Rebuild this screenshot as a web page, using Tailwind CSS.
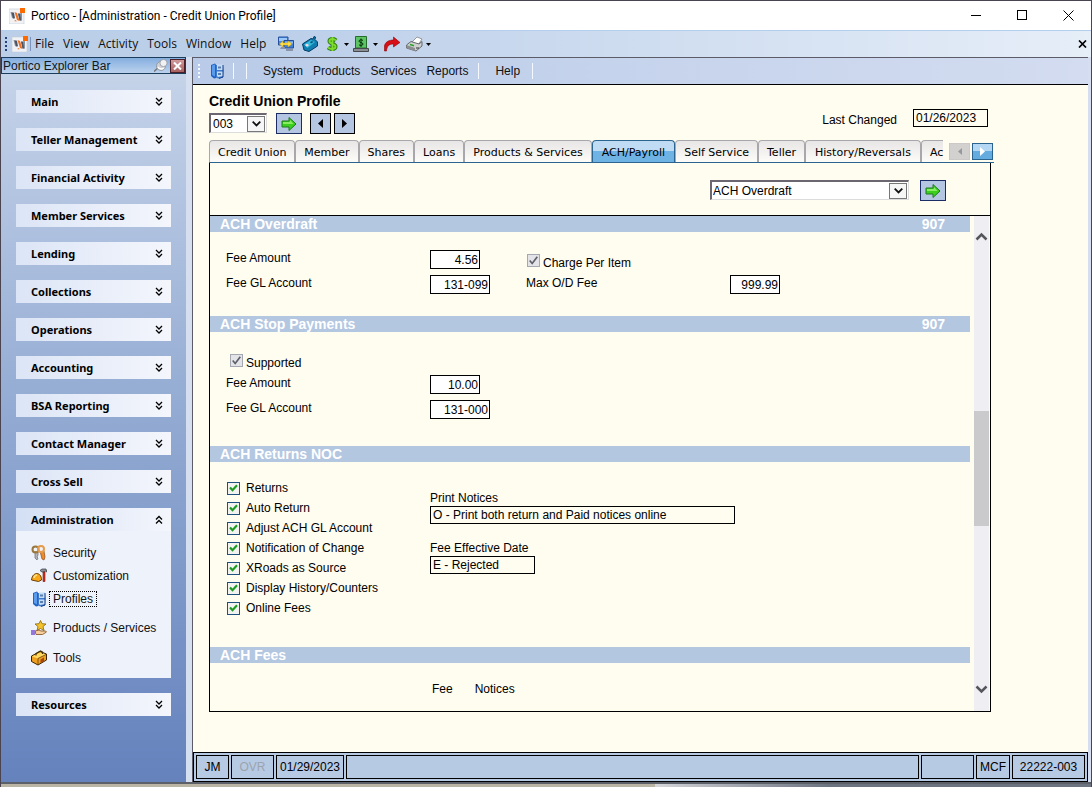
<!DOCTYPE html>
<html lang="en">
<head>
    <meta charset="UTF-8">
    <meta name="viewport" content="width=device-width, initial-scale=1.0">
    <title>Portico - [Administration - Credit Union Profile]</title>
    <script src="https://cdn.jsdelivr.net/npm/@tailwindcss/browser@4"></script>
</head>
<body class="flex min-h-screen flex-col border-x border-t border-[#4a4450] bg-[#d5dff0] font-['Liberation_Sans',Arial,sans-serif] text-[12px] leading-4 text-black">

    <!-- shared icons -->
    <svg class="hidden">
        <symbol id="logo" viewBox="0 0 16 16">
            <rect x="0" y="1" width="15" height="15" fill="#f1f2f5" stroke="#c4c8d0" stroke-width=".6"/>
            <path d="M1.500 4 5 4.500V11L3 10z" fill="#8a93a0"/>
            <path d="M2.500 4.500 5 5l1 5.500-2-.500z" fill="#4a5464"/>
            <path d="M5.500 4 8 5l2.500 8L8 12z" fill="#f0701c"/>
            <path d="M5 13l2-1 .500 1.500z" fill="#f0701c"/>
            <path d="M9 5.500 13 5v7.500l-2 .500z" fill="#8a93a0"/>
            <path d="M9 5.500 11 6l1 6-1.500.500z" fill="#4a5464"/>
            <rect x="11" y="0" width="5" height="5" fill="#ff6a00"/>
        </symbol>
        <symbol id="down" viewBox="0 0 8 10">
            <path d="M1 1l3 3 3-3M1 5l3 3 3-3" fill="none" stroke="#000" stroke-width="1.300"/>
        </symbol>
        <symbol id="up" viewBox="0 0 8 10">
            <path d="M1 4.500l3-3 3 3M1 8.500l3-3 3 3" fill="none" stroke="#000" stroke-width="1.300"/>
        </symbol>
        <symbol id="caret" viewBox="0 0 5 3"><path d="M0 0h5L2.500 3z"/></symbol>
        <symbol id="go" viewBox="0 0 16 16">
            <path d="M1 5h7V1.500L15 8l-7 6.500V11H1z" fill="#3ccf1e" stroke="#1c7a1c"/>
            <path d="M2 6h7V4l3.500 4H2z" fill="#8aec62"/>
        </symbol>
        <symbol id="drop" viewBox="0 0 9 6"><path d="M.7.7l3.800 3.800L8.300.7" fill="none" stroke="#111" stroke-width="1.800"/></symbol>
        <symbol id="tick" viewBox="0 0 9 8"><path d="M1 3.500l2.500 2.700L8 1.200" fill="none" stroke="currentColor" stroke-width="2.200"/></symbol>
        <symbol id="tick-thin" viewBox="0 0 9 9"><path d="M.7 4.500 3.200 7.500 8.300.8" fill="none" stroke="currentColor" stroke-width="1.700"/></symbol>
        <symbol id="cabinet" viewBox="0 0 16 16">
            <path d="M2 2l4-1.500 1.500 2V15L5 15.500 2 13z" fill="#1f63c4"/>
            <path d="M3 2.500 6 1.500v12L3 12z" fill="#5b9bee"/>
            <path d="M7 2h7l.500 6-.500 6.500-5 1L7 14z" fill="#3c78cc"/>
            <path d="M8 1.500h6v5.500H8zM8 8.500h6V13l-5 1-1-1z" fill="#c4dcf6"/>
            <path d="M9 3.500h3v2H9zM9 10h3v2H9z" fill="#5a7fae"/>
            <path d="M14 2v12l-4 1.500" fill="none" stroke="#16408c"/>
        </symbol>
    </svg>

    <header class="flex h-[30px] items-center border-b border-[#b4cfee] bg-white pl-2">
        <svg class="size-4 shrink-0"><use href="#logo"/></svg>
        <h1 class="ml-[6px] flex-1 font-[Roboto,'Open_Sans',sans-serif]">Portico - [Administration - Credit Union Profile]</h1>
        <button class="flex h-full w-[46px] items-center justify-center" aria-label="Minimize"><svg class="size-[11px]"><path d="M0 5.500h10" stroke="#000"/></svg></button>
        <button class="flex h-full w-[46px] items-center justify-center" aria-label="Maximize"><svg class="size-[11px]"><rect x=".5" y=".5" width="9" height="9" fill="none" stroke="#000"/></svg></button>
        <button class="flex h-full w-[46px] items-center justify-center" aria-label="Close"><svg class="size-[11px]"><path d="M.5.5l10 10M10.500.5l-10 10" stroke="#000"/></svg></button>
    </header>

    <nav class="flex h-[26px] items-center bg-linear-to-r from-[#bccfe9] from-25% to-[#e6eef8] pl-1 font-['Open_Sans','Noto_Sans',sans-serif] text-[#111]">
        <svg class="h-[15px] w-[3px]" fill="#26407c"><path d="M0 0h2v2H0zM0 4h2v2H0zM0 8h2v2H0zM0 12h2v2H0z"/></svg>
        <svg class="ml-1 size-4"><use href="#logo"/></svg>
        <span class="ml-[2px] h-[14px] w-px bg-[#7c94bc]"></span>
        <div class="ml-1 flex gap-[9px]">
            <button>File</button>
            <button>View</button>
            <button>Activity</button>
            <button>Tools</button>
            <button>Window</button>
            <button>Help</button>
        </div>
        <div class="ml-3 flex items-center">
            <button aria-label="Transfer">
                <svg class="block size-4" viewBox="0 0 16 16">
                    <path d="M.5 1H10v8H.5z" fill="#4a8ae0" stroke="#2550a0"/><path d="M1 2h8v3H1z" fill="#9cc8f8"/>
                    <path d="M6 4.500h9.500V12H6z" fill="#3f7fd8" stroke="#234c94"/><path d="M7 5.500h8v2H7z" fill="#8cbcf4"/>
                    <path d="M3 11h4v2H2zM8 13h7v2H8z" fill="#8a93a8"/>
                    <path d="M1.500 8 5 5v2h5V5l4 3-4 3V9H5v2z" fill="#ffe04a" stroke="#c89a10" stroke-width=".5"/>
                </svg>
            </button>
            <button class="ml-2" aria-label="Phone">
                <svg class="block size-4" viewBox="0 0 16 16">
                    <path d="M.5 8 9 2.500l2 .500 1-2.500 1.500.5-.500 2.500L15.500 6v4L7 15.500 2 14z" fill="#0f7fb0" stroke="#063c66"/>
                    <path d="M2 8.500 9 4l4 2-7.500 6z" fill="#35bcdc"/>
                    <path d="M3 9l2-1.200 2 1.200-2 1.700z" fill="#ffd7df"/><path d="M8 6l2-1 1.500 1L9 7.500z" fill="#0b4f7c"/>
                </svg>
            </button>
            <button class="ml-[6px] flex items-center" aria-label="Money">
                <svg class="block size-4" viewBox="0 0 16 16">
                    <path d="M12 4.500C10 2.500 5.500 2.500 5.500 5.300c0 3 6 2.200 6 5.200 0 3-5 3-7.500 1M8.500 1v14" fill="none" stroke="#2f7c14" stroke-width="4"/>
                    <path d="M12 4.500C10 2.500 5.500 2.500 5.500 5.300c0 3 6 2.200 6 5.200 0 3-5 3-7.500 1M8.500 1v14" fill="none" stroke="#7ddc2c" stroke-width="2"/>
                </svg>
                <svg class="ml-1 h-[3px] w-[5px]"><use href="#caret"/></svg>
            </button>
            <button class="ml-1 flex items-center" aria-label="Cash">
                <svg class="block size-4" viewBox="0 0 16 16">
                    <path d="M2.500.5h11V12h-11z" fill="#5cc464" stroke="#256c2c"/>
                    <path d="M10 4.500C9 3.500 6 3.500 6 5.200c0 1.600 4 1 4 2.800C10 9.800 7 9.800 6 8.800M8 2.500v8.500" fill="none" stroke="#052e08"/>
                    <path d="M.5 12.500h15v3H.5z" fill="#8b8f94" stroke="#45484c"/>
                </svg>
                <svg class="ml-1 h-[3px] w-[5px]"><use href="#caret"/></svg>
            </button>
            <button class="ml-[6px]" aria-label="Redo">
                <svg class="block size-4" viewBox="0 0 16 16"><path d="M.5 15V10C1 6 5 4 9.500 4V1L16 6.500 9.500 11V8C5 8 3 10 2.500 15z" fill="#d80f14" stroke="#8c0508" stroke-width=".6"/></svg>
            </button>
            <button class="ml-[6px] flex items-center" aria-label="Print">
                <svg class="block h-4 w-[17px]" viewBox="0 0 17 16">
                    <path d="M6 6 11 1l5 2-4 6z" fill="#fff" stroke="#777" stroke-width=".7"/>
                    <path d="M.5 9 5 5.500l8 2.500 3-2.500V10l-6 5L.500 12z" fill="#cfd0d0" stroke="#4c4c50" stroke-width=".8"/>
                    <path d="M.5 9 9 12v3L.500 12z" fill="#8c8e92"/><path d="M4 8.500l4 1.300" stroke="#28a428" stroke-width="1.500"/><path d="M10 12h3" stroke="#333"/>
                </svg>
                <svg class="ml-[3px] h-[3px] w-[5px]"><use href="#caret"/></svg>
            </button>
        </div>
        <button class="mr-1 ml-auto" aria-label="Close profile"><svg class="block h-2 w-[9px]"><path d="M1 .5l7 7M8 .5l-7 7" stroke="#000" stroke-width="1.700"/></svg></button>
    </nav>

    <div class="flex flex-1 pr-[3px]">
        <!-- explorer bar -->
        <aside class="flex w-[185px] shrink-0 flex-col bg-linear-to-b from-[#c8d5ea] via-[#92aad2] to-[#6582bd]">
            <div class="flex h-[17px] items-center border border-[#1c3c5c] bg-linear-to-b from-[#84aede] to-[#bcd2ee] pl-px">
                <h2 class="flex-1 text-[#101820]">Portico Explorer Bar</h2>
                <svg class="h-[13px] w-[14px]" viewBox="0 0 14 13">
                    <path d="M0 12.500 5 8" stroke="#777" stroke-width="1.500"/>
                    <circle cx="7" cy="7" r="4.500" fill="#d0d2d6" stroke="#8d9096" stroke-width=".8"/>
                    <circle cx="9.500" cy="4" r="3.600" fill="#f0f1f4" stroke="#90949a" stroke-width=".8"/>
                    <path d="M4 8c1 2 4 2.500 6 1" fill="none" stroke="#fff" stroke-width="1.500"/>
                </svg>
                <button class="ml-[2px] flex h-[14px] w-[15px] items-center justify-center border border-[#4a2028] bg-linear-to-b from-[#d29a9c] to-[#a8605f]" aria-label="Close explorer bar"><svg class="h-2 w-[9px]"><path d="M1 .5l7 7M8 .5l-7 7" stroke="#fff" stroke-width="2"/></svg></button>
            </div>
            <div class="flex flex-col gap-[15px] py-4 pr-[15px] pl-[15px] font-['Noto_Sans','Open_Sans',sans-serif] text-[11px] font-bold">
                <button class="flex h-[23px] items-center justify-between bg-linear-to-r from-[#dce5f6] to-[#f4f6fc] pr-2 pl-[15px]">Main<svg class="h-[10px] w-2"><use href="#down"/></svg></button>
                <button class="flex h-[23px] items-center justify-between bg-linear-to-r from-[#dce5f6] to-[#f4f6fc] pr-2 pl-[15px]">Teller Management<svg class="h-[10px] w-2"><use href="#down"/></svg></button>
                <button class="flex h-[23px] items-center justify-between bg-linear-to-r from-[#dce5f6] to-[#f4f6fc] pr-2 pl-[15px]">Financial Activity<svg class="h-[10px] w-2"><use href="#down"/></svg></button>
                <button class="flex h-[23px] items-center justify-between bg-linear-to-r from-[#dce5f6] to-[#f4f6fc] pr-2 pl-[15px]">Member Services<svg class="h-[10px] w-2"><use href="#down"/></svg></button>
                <button class="flex h-[23px] items-center justify-between bg-linear-to-r from-[#dce5f6] to-[#f4f6fc] pr-2 pl-[15px]">Lending<svg class="h-[10px] w-2"><use href="#down"/></svg></button>
                <button class="flex h-[23px] items-center justify-between bg-linear-to-r from-[#dce5f6] to-[#f4f6fc] pr-2 pl-[15px]">Collections<svg class="h-[10px] w-2"><use href="#down"/></svg></button>
                <button class="flex h-[23px] items-center justify-between bg-linear-to-r from-[#dce5f6] to-[#f4f6fc] pr-2 pl-[15px]">Operations<svg class="h-[10px] w-2"><use href="#down"/></svg></button>
                <button class="flex h-[23px] items-center justify-between bg-linear-to-r from-[#dce5f6] to-[#f4f6fc] pr-2 pl-[15px]">Accounting<svg class="h-[10px] w-2"><use href="#down"/></svg></button>
                <button class="flex h-[23px] items-center justify-between bg-linear-to-r from-[#dce5f6] to-[#f4f6fc] pr-2 pl-[15px]">BSA Reporting<svg class="h-[10px] w-2"><use href="#down"/></svg></button>
                <button class="flex h-[23px] items-center justify-between bg-linear-to-r from-[#dce5f6] to-[#f4f6fc] pr-2 pl-[15px]">Contact Manager<svg class="h-[10px] w-2"><use href="#down"/></svg></button>
                <button class="flex h-[23px] items-center justify-between bg-linear-to-r from-[#dce5f6] to-[#f4f6fc] pr-2 pl-[15px]">Cross Sell<svg class="h-[10px] w-2"><use href="#down"/></svg></button>
                <div>
                    <button class="flex h-[23px] w-full items-center justify-between bg-linear-to-r from-[#d3dff4] to-[#f4f6fc] pr-2 pl-[15px]">Administration<svg class="h-[10px] w-2"><use href="#up"/></svg></button>
                    <ul class="bg-[#edf2fb] pt-[10px] pb-[5px] pl-[15px] font-['Liberation_Sans',Arial,sans-serif] text-[12px] font-normal text-[#111]">
                        <li class="h-[23px]"><a href="#" class="flex h-full items-center gap-[6px]">
                            <svg class="size-4" viewBox="0 0 16 16">
                                <path d="M4 6v7l2 2 1-2-1-1 1-2V6" fill="#b5b7ba" stroke="#66686c" stroke-width=".7"/>
                                <circle cx="4.500" cy="4.500" r="3" fill="none" stroke="#98763c" stroke-width="2"/>
                                <path d="M9 6l2 8 2 1 1-3-1-6" fill="#ef8a2c" stroke="#904c10" stroke-width=".7"/>
                                <circle cx="10" cy="4" r="3" fill="none" stroke="#e59a4c" stroke-width="2"/>
                            </svg>Security</a></li>
                        <li class="h-[23px]"><a href="#" class="flex h-full items-center gap-[6px]">
                            <svg class="size-4" viewBox="0 0 16 16">
                                <path d="M.5 12C1 7 4 5.500 6 5.500s4.500 2 4.500 6.500l-3 1.500z" fill="#f8a818" stroke="#6c3c04"/>
                                <path d="M3 10c.500-2 1.500-3 3-3" fill="none" stroke="#ffe48a" stroke-width="1.500"/>
                                <path d="M9 2.500 11 1h4l1 3-2-1-1 1h-2z" fill="#8c9098" stroke="#36383c" stroke-width=".7"/>
                                <path d="M12 4h2v9.500h-2z" fill="#d43424" stroke="#74140c" stroke-width=".6"/>
                            </svg>Customization</a></li>
                        <li class="h-[23px]"><a href="#" class="flex h-full items-center gap-[2px]"><svg class="size-4"><use href="#cabinet"/></svg><span class="border border-dotted border-black px-[3px] leading-[14px]">Profiles</span></a></li>
                        <li class="mt-[3px] h-[30px]"><a href="#" class="flex h-full items-center gap-[6px]">
                            <svg class="size-4" viewBox="0 0 16 16">
                                <path d="M9.500.5l1.500 3.200 4 .3-3 2.600 1 3.900-3.500-2-3.500 2 1-3.900-3-2.600 4-.3z" fill="#f4c22c" stroke="#8c6408" stroke-width=".8"/>
                                <path d="M4 11l4-1 2 1h4.500l1 1-4 2.500H5z" fill="#f8cf9c" stroke="#7c4c1c" stroke-width=".8"/>
                                <path d="M0 10h4v5H0z" fill="#9478d8"/>
                            </svg>Products / Services</a></li>
                        <li class="h-[30px]"><a href="#" class="flex h-full items-center gap-[6px]">
                            <svg class="size-4" viewBox="0 0 16 16">
                                <path d="M.5 6 9 1.500 15.500 4v6L7 15 .5 11.500z" fill="#eda020" stroke="#3c2400"/>
                                <path d="M1 6.500 9 2.500 15 4.500 7 8.500z" fill="#ffd860"/>
                                <path d="M5 5.500V3.500L9.500 1l2 1v2" fill="none" stroke="#443000" stroke-width="1.200"/>
                                <path d="M7 8.500V15M7 8.500 15 4.500" fill="none" stroke="#6c3c00" stroke-width=".8"/><path d="M9.500 9.500l3.500-2V11l-3.500 2z" fill="#a84410"/>
                            </svg>Tools</a></li>
                    </ul>
                </div>
                <button class="flex h-[23px] items-center justify-between bg-linear-to-r from-[#dce5f6] to-[#f4f6fc] pr-2 pl-[15px]">Resources<svg class="h-[10px] w-2"><use href="#down"/></svg></button>
            </div>
        </aside>

        <main class="ml-[6px] flex min-w-0 flex-1 flex-col border-t border-l border-[#5c5c68] bg-[#fffcf0]">
            <nav class="flex h-[27px] items-center border-b border-black bg-linear-to-r from-[#b9cbe8] to-[#d3dcf0] pl-[5px] text-[#111]">
                <svg class="h-[14px] w-[3px]" fill="#f4f8ff"><path d="M0 0h2v2H0zM0 4h2v2H0zM0 8h2v2H0zM0 12h2v2H0z"/></svg>
                <button class="ml-2" aria-label="Profiles"><svg class="block size-4"><use href="#cabinet"/></svg></button>
                <span class="ml-2 h-4 w-px bg-[#f4f8ff]"></span>
                <span class="ml-3 h-4 w-px bg-[#f4f8ff]"></span>
                <div class="ml-4 flex gap-[10px]">
                    <button>System</button>
                    <button>Products</button>
                    <button>Services</button>
                    <button>Reports</button>
                </div>
                <span class="ml-[10px] h-4 w-px bg-[#f4f8ff]"></span>
                <button class="ml-4">Help</button>
                <span class="ml-3 h-4 w-px bg-[#f4f8ff]"></span>
            </nav>

            <div class="flex-1 px-4 pt-2 pb-10">
                <div class="max-w-[785px]">
                    <div class="flex justify-between">
                        <div>
                            <h2 class="text-[14px] font-bold">Credit Union Profile</h2>
                            <div class="mt-1 flex items-start">
                                <label class="grid h-5 w-[58px] items-center border-t-2 border-l-2 border-r border-b border-[#6c6670] border-r-[#dcdcdc] border-b-[#dcdcdc] bg-white pr-px">
                                    <select class="w-full appearance-none pl-[2px] [grid-area:1/1]" aria-label="Credit union">
                                        <option>003</option>
                                    </select>
                                    <span class="pointer-events-none flex h-4 w-[18px] items-center justify-center justify-self-end border border-[#777] bg-[#f6f6f6] [grid-area:1/1]"><svg class="h-[6px] w-[9px]"><use href="#drop"/></svg></span>
                                </label>
                                <button class="ml-[9px] flex h-[21px] w-[26px] items-center justify-center border border-[#1c2c64] bg-[#b4c6e2]" aria-label="Go"><svg class="size-4"><use href="#go"/></svg></button>
                                <button class="ml-2 flex h-[21px] w-[21px] items-center justify-center border border-black bg-[#b4c6e2]" aria-label="Previous"><svg class="h-[9px] w-[5px]"><path d="M5 0v9L0 4.500z"/></svg></button>
                                <button class="ml-[3px] flex h-[21px] w-[21px] items-center justify-center border border-black bg-[#b4c6e2]" aria-label="Next"><svg class="h-[9px] w-[5px]"><path d="M0 0v9l5-4.500z"/></svg></button>
                            </div>
                        </div>
                        <div class="mr-[6px] flex items-start pt-4">
                            <label for="changed" class="mr-4 pt-[3px]">Last Changed</label>
                            <input id="changed" value="01/26/2023" class="h-[18px] w-[75px] border border-black px-[2px]">
                        </div>
                    </div>

                    <div class="mt-[6px] flex h-[23px] items-end border-b border-[#2c6490] font-['DejaVu_Sans',Verdana,sans-serif] text-[11px]">
                        <div class="flex min-w-0 flex-1 overflow-hidden whitespace-nowrap *:h-[22px] *:shrink-0 *:rounded-t-[4px] *:border *:border-b-0 *:border-[#a8a8ac] *:px-2 *:pt-[2px]">
                            <button class="bg-linear-to-b from-[#e8e6e6] to-[#fdfcf8]">Credit Union</button>
                            <button class="bg-linear-to-b from-[#e8e6e6] to-[#fdfcf8]">Member</button>
                            <button class="bg-linear-to-b from-[#e8e6e6] to-[#fdfcf8]">Shares</button>
                            <button class="bg-linear-to-b from-[#e8e6e6] to-[#fdfcf8]">Loans</button>
                            <button class="bg-linear-to-b from-[#e8e6e6] to-[#fdfcf8]">Products &amp; Services</button>
                            <button class="border-[#2c6490]! bg-linear-to-b from-[#bfdcf4] from-50% to-[#6fb2e4] to-50% px-[9px]!">ACH/Payroll</button>
                            <button class="bg-linear-to-b from-[#e8e6e6] to-[#fdfcf8]">Self Service</button>
                            <button class="bg-linear-to-b from-[#e8e6e6] to-[#fdfcf8]">Teller</button>
                            <button class="bg-linear-to-b from-[#e8e6e6] to-[#fdfcf8] px-[9px]!">History/Reversals</button>
                            <button class="rounded-r-none! border-r-0! bg-linear-to-b from-[#e8e6e6] to-[#fdfcf8] pr-0!">Ac</button>
                        </div>
                        <div class="ml-[5px] flex gap-[2px] pr-px pb-[2px]">
                            <button class="flex h-[17px] w-[21px] items-center justify-center border border-[#ccc8c8] bg-[#d3d0d0]" aria-label="Scroll tabs left"><svg class="h-[7px] w-1" fill="#98989c"><path d="M4 0v7L0 3.500z"/></svg></button>
                            <button class="flex h-[17px] w-[21px] items-center justify-center border border-[#2c6490] bg-linear-to-b from-[#b4d8f4] from-50% to-[#64acdf] to-50%" aria-label="Scroll tabs right"><svg class="h-[9px] w-[5px]" fill="#fff"><path d="M0 0v9l5-4.500z"/></svg></button>
                        </div>
                    </div>

                    <section class="mr-[3px] border border-t-0 border-black">
                        <div class="flex h-[53px] justify-end border-b border-black pt-[17px] pr-11">
                            <label class="grid h-5 w-[199px] items-center border-t-2 border-l-2 border-r border-b border-[#6c6670] border-r-[#dcdcdc] border-b-[#dcdcdc] bg-white pr-px">
                                <select class="w-full appearance-none pl-px [grid-area:1/1]" aria-label="Jump to section">
                                    <option>ACH Overdraft</option>
                                </select>
                                <span class="pointer-events-none flex h-4 w-[18px] items-center justify-center justify-self-end border border-[#777] bg-[#f6f6f6] [grid-area:1/1]"><svg class="h-[6px] w-[9px]"><use href="#drop"/></svg></span>
                            </label>
                            <button class="ml-[11px] flex h-[21px] w-[26px] items-center justify-center border border-[#1c2c64] bg-[#b4c6e2]" aria-label="Go to section"><svg class="size-4"><use href="#go"/></svg></button>
                        </div>

                        <div class="flex">
                            <form class="min-w-0 flex-1">
                                <h3 class="flex h-4 justify-between bg-[#b3c7e1] pr-[25px] pl-[10px] text-[14px] font-bold text-white"><span>ACH Overdraft</span><span>907</span></h3>
                                <div class="grid auto-rows-[25px] grid-cols-[204px_96px_204px_1fr] items-start pt-[18px] pb-4 pl-4">
                                    <label for="od-fee">Fee Amount</label>
                                    <input id="od-fee" value="4.56" class="h-[19px] w-[50px] border border-black bg-white px-px text-right">
                                    <label class="col-span-2 flex items-start gap-[3px] pt-1 pl-px">
                                        <span class="grid size-[13px] place-items-center text-[#5c6068]">
                                            <input type="checkbox" checked disabled class="size-[13px] appearance-none border border-[#a4a8b0] bg-[#e4e4e8] [grid-area:1/1]">
                                            <svg class="pointer-events-none size-[9px] [grid-area:1/1]"><use href="#tick-thin"/></svg>
                                        </span>
                                        <span class="pt-px">Charge Per Item</span>
                                    </label>
                                    <label for="od-gl">Fee GL Account</label>
                                    <input id="od-gl" value="131-099" class="h-[19px] w-[60px] border border-black bg-white px-px text-right">
                                    <label for="od-max">Max O/D Fee</label>
                                    <input id="od-max" value="999.99" class="h-[19px] w-[50px] border border-black bg-white px-px text-right">
                                </div>

                                <h3 class="flex h-4 justify-between bg-[#b3c7e1] pr-[25px] pl-[10px] text-[14px] font-bold text-white"><span>ACH Stop Payments</span><span>907</span></h3>
                                <div class="grid auto-rows-[25px] grid-cols-[204px_1fr] items-start pt-[18px] pb-[21px] pl-4">
                                    <label class="col-span-2 flex items-start gap-[3px] pt-1 pl-1">
                                        <span class="grid size-[13px] place-items-center text-[#5c6068]">
                                            <input type="checkbox" checked disabled class="size-[13px] appearance-none border border-[#a4a8b0] bg-[#e4e4e8] [grid-area:1/1]">
                                            <svg class="pointer-events-none size-[9px] [grid-area:1/1]"><use href="#tick-thin"/></svg>
                                        </span>
                                        <span class="pt-px">Supported</span>
                                    </label>
                                    <label for="sp-fee">Fee Amount</label>
                                    <input id="sp-fee" value="10.00" class="h-[19px] w-[50px] border border-black bg-white px-px text-right">
                                    <label for="sp-gl">Fee GL Account</label>
                                    <input id="sp-gl" value="131-000" class="h-[19px] w-[60px] border border-black bg-white px-px text-right">
                                </div>

                                <h3 class="flex h-4 justify-between bg-[#b3c7e1] pr-[25px] pl-[10px] text-[14px] font-bold text-white">ACH Returns NOC</h3>
                                <div class="grid grid-cols-[204px_1fr] pt-4 pb-[29px] pl-4">
                                    <div class="text-[#1c9c24] *:flex *:h-5 *:items-center *:gap-[6px] *:pl-px">
                                        <label><span class="grid size-[13px] place-items-center"><input type="checkbox" checked class="size-[13px] appearance-none border border-[#1c5180] bg-[#f2f2f0] [grid-area:1/1]"><svg class="pointer-events-none h-2 w-[9px] [grid-area:1/1]"><use href="#tick"/></svg></span><span class="text-black">Returns</span></label>
                                        <label><span class="grid size-[13px] place-items-center"><input type="checkbox" checked class="size-[13px] appearance-none border border-[#1c5180] bg-[#f2f2f0] [grid-area:1/1]"><svg class="pointer-events-none h-2 w-[9px] [grid-area:1/1]"><use href="#tick"/></svg></span><span class="text-black">Auto Return</span></label>
                                        <label><span class="grid size-[13px] place-items-center"><input type="checkbox" checked class="size-[13px] appearance-none border border-[#1c5180] bg-[#f2f2f0] [grid-area:1/1]"><svg class="pointer-events-none h-2 w-[9px] [grid-area:1/1]"><use href="#tick"/></svg></span><span class="text-black">Adjust ACH GL Account</span></label>
                                        <label><span class="grid size-[13px] place-items-center"><input type="checkbox" checked class="size-[13px] appearance-none border border-[#1c5180] bg-[#f2f2f0] [grid-area:1/1]"><svg class="pointer-events-none h-2 w-[9px] [grid-area:1/1]"><use href="#tick"/></svg></span><span class="text-black">Notification of Change</span></label>
                                        <label><span class="grid size-[13px] place-items-center"><input type="checkbox" checked class="size-[13px] appearance-none border border-[#1c5180] bg-[#f2f2f0] [grid-area:1/1]"><svg class="pointer-events-none h-2 w-[9px] [grid-area:1/1]"><use href="#tick"/></svg></span><span class="text-black">XRoads as Source</span></label>
                                        <label><span class="grid size-[13px] place-items-center"><input type="checkbox" checked class="size-[13px] appearance-none border border-[#1c5180] bg-[#f2f2f0] [grid-area:1/1]"><svg class="pointer-events-none h-2 w-[9px] [grid-area:1/1]"><use href="#tick"/></svg></span><span class="text-black">Display History/Counters</span></label>
                                        <label><span class="grid size-[13px] place-items-center"><input type="checkbox" checked class="size-[13px] appearance-none border border-[#1c5180] bg-[#f2f2f0] [grid-area:1/1]"><svg class="pointer-events-none h-2 w-[9px] [grid-area:1/1]"><use href="#tick"/></svg></span><span class="text-black">Online Fees</span></label>
                                    </div>
                                    <div class="flex flex-col items-start pt-3">
                                        <label for="print">Print Notices</label>
                                        <input id="print" value="O - Print both return and Paid notices online" class="h-[18px] w-[305px] border border-black px-[2px]">
                                        <label for="effective" class="mt-4">Fee Effective Date</label>
                                        <input id="effective" value="E - Rejected" class="h-[18px] w-[105px] border border-black px-[2px]">
                                    </div>
                                </div>

                                <h3 class="flex h-4 justify-between bg-[#b3c7e1] pr-[25px] pl-[10px] text-[14px] font-bold text-white">ACH Fees</h3>
                                <div class="flex gap-[22px] pt-[18px] pb-[14px] pl-[222px]"><span>Fee</span><span>Notices</span></div>
                            </form>

                            <!-- scroll bar -->
                            <div class="mr-px ml-1 flex w-[15px] flex-col items-center bg-[#efeff3] pt-4 pb-[17px]">
                                <svg class="h-[9px] w-[13px]"><path d="M1.500 7.500l5-5 5 5" fill="none" stroke="#55555c" stroke-width="2.500"/></svg>
                                <span class="mt-[170px] h-[115px] w-[15px] bg-[#cacacc]"></span>
                                <svg class="mt-auto h-[9px] w-[13px]"><path d="M1.500 1.500l5 5 5-5" fill="none" stroke="#55555c" stroke-width="2.500"/></svg>
                            </div>
                        </div>
                    </section>
                </div>
            </div>

            <footer class="flex h-[30px] gap-[2px] border border-black bg-[#b7cae4] p-[2px] *:flex *:items-center *:justify-center *:border *:border-black">
                <span class="w-[33px]">JM</span>
                <span class="w-[43px] text-[#9ca4ac]">OVR</span>
                <span class="w-[68px]">01/29/2023</span>
                <span class="flex-1"></span>
                <span class="w-[53px]"></span>
                <span class="w-[34px]">MCF</span>
                <span class="w-[73px]">22222-003</span>
            </footer>
        </main>
    </div>
    <div class="h-[5px] border-t-2 border-[#5c6068] bg-linear-to-r from-[#b9b4a4] from-60% via-[#d6d6da] via-60% to-[#6c7480] to-76%"></div>
</body>
</html>
